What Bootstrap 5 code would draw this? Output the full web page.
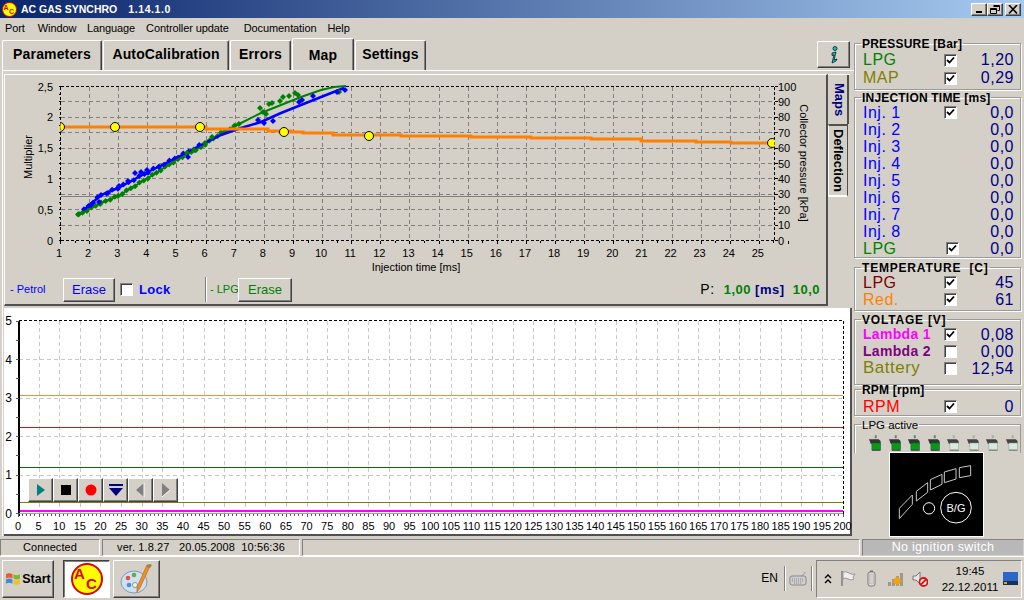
<!DOCTYPE html>
<html lang="en">
<head>
  <meta charset="UTF-8">
  <meta name="viewport" content="width=device-width, initial-scale=1.0">
  <title>AC GAS SYNCHRO</title>
  <link href="https://cdn.jsdelivr.net/npm/bootstrap@5.3.3/dist/css/bootstrap.min.css" rel="stylesheet">
  <style>
    html, body { margin:0; height:100%; overflow:hidden; background:#d4d0c8; }
    body { font-family:"Liberation Sans", Arial, sans-serif; font-size:11px; color:#000; line-height:1.2; }
    .app { width:1024px; height:600px; }
    .raised { background:#d4d0c8; border:1px solid; border-color:#fff #404040 #404040 #fff; box-shadow:inset -1px -1px 0 #808080; }
    .sunken { border:1px solid; border-color:#808080 #fff #fff #808080; }
    .svg-defs { position:absolute; }

    .title-bar { height:18px; background:linear-gradient(90deg,#0a246a,#a6caf0); color:#fff; font-weight:700; font-size:10.5px; padding:0 3px 0 2px; }
    .title-ver { margin-left:11px; letter-spacing:.6px; }
    .cap-btn { width:16px; height:13px; padding:0; display:flex; align-items:center; justify-content:center; }
    .cap-close { margin-left:2px; }
    .menu-bar { height:20px; padding:1px 0 0 5px; gap:0; letter-spacing:-.1px; white-space:nowrap; }
    .m-win { margin-left:13px; } .m-lang { margin-left:10.6px; } .m-ctl { margin-left:11px; } .m-doc { margin-left:15px; } .m-help { margin-left:11px; }

    .main-area { height:500px; }
    .left-col { width:854px; }
    .tab-strip { height:32px; padding-left:2px; }
    .wtab { height:30px; padding-bottom:2px; font-size:14px; font-weight:700; letter-spacing:.15px; background:#d4d0c8; border:1px solid; border-color:#fff #404040 transparent #fff; border-bottom:0; border-radius:2px 2px 0 0; box-shadow:inset -1px 0 0 #808080; display:flex; align-items:center; justify-content:center; margin-right:1px; }
    .wtab.on { height:32px; padding:2px 0 0; margin-top:-2px; position:relative; z-index:2; }
    .t-par { width:100px; } .t-auto { width:126px; } .t-err { width:61px; } .t-map { width:62px; } .t-set { width:71px; }
    .info-btn { width:33px; height:27px; margin:3px 4px 0 auto; display:flex; align-items:center; justify-content:center; }

    .page-frame { height:466px; margin-left:2px; border-top:1px solid #fff; border-left:1px solid #fff; padding:3px 0 0 1px; }
    .upper-panel { height:232px; }
    .map-box { width:824px; height:232px; border-top:1px solid #fff; border-left:1px solid #fff; border-bottom:2px solid #505050; border-right:2px solid #505050; }
    .map-box svg, .trend-box svg { display:block; }
    .ctrl-row { height:29px; padding-left:5px; white-space:nowrap; }
    .win-btn { height:24px; font-size:13px; display:flex; align-items:center; justify-content:center; }
    .petrol { color:#0000ff; }
    .lpg-c { color:#008000; }
    .petrol-lbl { width:53px; }
    .erase-a { width:52px; }
    .erase-b { width:54px; }
    .chk.lock-chk { margin-left:5px; }
    .lock-txt { margin-left:6px; width:44px; font-size:13px; font-weight:700; color:#0000ff; letter-spacing:.3px; }
    .v-sep { width:2px; height:25px; margin-left:22px; border-left:1px solid #808080; border-right:1px solid #fff; }
    .lpg-lbl { margin-left:3px; width:28px; }
    .p-read { margin-left:auto; font-size:13px; font-weight:700; padding-right:6px; letter-spacing:.5px; }
    .p-read .nv { color:#000080; }
    .p-read .pl { font-weight:400; font-size:14px; margin-right:5px; }
    .side-tabs { width:22px; border-top:1px solid #fff; }
    .vtab { writing-mode:vertical-rl; font-size:13px; font-weight:700; display:flex; align-items:center; justify-content:center; }
    .vtab.maps { height:49px; width:21px; padding-left:4px; color:#000080; border-right:2px solid #505050; }
    .vtab.defl { height:73px; width:20px; border:1px solid; border-color:#505050 #505050 #808080 #fff; border-top-width:2px; border-bottom:2px solid #fff; }

    .trend-box { height:228px; width:848px; margin-top:2px; background:#fff; border-right:2px solid #505050; border-bottom:2px solid #505050; position:relative; }
    .play-bar { position:absolute; left:24px; top:170px; }
    .play-btn { width:25px; height:24px; display:flex; align-items:center; justify-content:center; }

    .right-col { width:170px; }
    .grp { border:1px solid #9a9a9a; box-shadow:1px 1px 0 #fff, inset 1px 1px 0 #fff; margin:0 3px 0 0; padding:0 6px 0 8px; min-width:0; }
    .grp legend { float:none; width:auto; margin:0 0 0 -2px; padding:2px 1px 0; font-size:12px; font-weight:700; line-height:12px; letter-spacing:.2px; }
    .grp legend.wide { letter-spacing:.8px; }
    .grp legend.thin { font-weight:400; font-size:11.5px; letter-spacing:0; margin-left:6px; }
    .g-press { margin-top:-2px; height:54px; padding-top:1px; }
    .g-inj { height:168px; }
    .g-temp { margin-top:2px; height:51px; }
    .g-volt { margin-top:1px; height:73px; }
    .g-rpm { margin-top:-3px; height:34px; padding-top:2px; }
    .g-act { margin-top:1px; height:36px; border-bottom:0; box-shadow:inset 1px 1px 0 #fff; padding:0; }
    .grp-row { display:flex; align-items:center; height:17px; font-size:16px; letter-spacing:.5px; white-space:nowrap; }
    .grp-row.tall { height:18px; }
    .grp-row .nm { width:81px; }
    .grp-row .nm.sm { font-size:14px; font-weight:700; letter-spacing:.3px; }
    .grp-row .nm.lpg-row { width:83px; }
    .grp-row .val { margin-left:auto; color:#000080; }
    .c-map { color:#808000; } .c-temp { color:#800000; } .c-red { color:#ff8000; }
    .c-l1 { color:#ff00ff; } .c-l2 { color:#800080; } .c-bat { color:#808000; font-size:17px; } .c-rpm { color:#ff0000; }
    .chk { appearance:none; width:13px; height:13px; margin:0; background:#fff no-repeat center; border:1px solid; border-color:#808080 #fff #fff #808080; box-shadow:inset 1px 1px 0 #404040; flex:none; display:block; }
    .chk:checked { background-image:url("data:image/svg+xml,%3Csvg xmlns='http://www.w3.org/2000/svg' width='9' height='9'%3E%3Cpath d='M1 4l2.500 2.500L8 1.500' fill='none' stroke='%23000' stroke-width='1.800'/%3E%3C/svg%3E"); }
    .lpg-ico { gap:4px; height:22px; padding:4px 0 0 13px; }
    .ign-wrap { padding-left:36px; }
    .ign-box { width:93px; height:83px; background:#000; outline:1px solid #fff; }

    .status-row { height:18px; padding-top:1px; }
    .s-cell { height:17px; display:flex; align-items:center; justify-content:center; margin-right:2px; letter-spacing:.1px; }
    .s-conn { width:100px; } .s-ver { width:198px; } .s-gap { width:558px; }
    .no-ign { flex:1; background:#b8b8b8; color:#fff; font-size:12.5px; letter-spacing:.3px; margin-right:0; border-color:#808080 #d4d0c8 #d4d0c8 #808080; }
    .task-bar { height:44px; border-top:1px solid #fff; padding:3px 2px; }
    .task-btn { height:38px; display:flex; align-items:center; justify-content:center; }
    .start-btn { width:52px; font-weight:700; font-size:12.5px; gap:1px; }
    .ac-btn { width:47px; margin-left:9px; background:#fff; border:1px solid; border-color:#404040 #fff #fff #404040; box-shadow:inset 1px 1px 0 #808080; }
    .pal-btn { width:47px; margin-left:3px; }
    .en-txt { font-size:12px; margin-right:6px; }
    .tray-sep { width:2px; height:25px; border-left:1px solid #808080; border-right:1px solid #fff; }
    .kbd-ico { margin:0 4px 0 3px; }
    .tray { width:206px; height:38px; padding:0 3px 0 7px; margin-left:3px; }
    .i-flag { margin-left:8px; } .i-bat { margin-left:10px; } .i-sig { margin-left:11px; } .i-spk { margin-left:8px; }
    .clock { width:60px; text-align:center; font-size:11.5px; line-height:16px; margin-left:12px; }
  </style>
</head>
<body>
<svg width="0" height="0" class="svg-defs">
  <defs>
    <g id="ac-logo">
      <circle cx="16" cy="16" r="15" fill="#ffff00" stroke="#e00000" stroke-width="2"/>
      <text x="3" y="16" font-family="Liberation Sans" font-weight="700" font-size="15" fill="#e00000">A</text>
      <text x="15" y="26" font-family="Liberation Sans" font-weight="700" font-size="15" fill="#e00000">C</text>
    </g>
    <g id="inj-on">
      <rect x="7" y="0" width="2" height="3" fill="#777"/>
      <path d="M1 4h10l2 2v3H3z" fill="#333"/>
      <rect x="4" y="8" width="9" height="7" fill="#0a9a10" stroke="#064" stroke-width=".5"/>
      <rect x="4" y="15" width="9" height="1" fill="#333"/>
    </g>
    <g id="inj-off">
      <rect x="7" y="0" width="2" height="3" fill="#aaa"/>
      <path d="M1 4h10l2 2v3H3z" fill="#444"/>
      <rect x="4" y="8" width="9" height="7" fill="#d5ebe0" stroke="#8a9a90" stroke-width=".5"/>
      <rect x="4" y="15" width="9" height="1" fill="#777"/>
    </g>
  </defs>
</svg>

<div class="app d-flex flex-column">
  <!-- Title bar -->
  <div class="title-bar d-flex align-items-center">
    <svg width="15" height="15" viewBox="0 0 32 32" class="me-1"><use href="#ac-logo"/></svg>
    <span>AC GAS SYNCHRO</span><span class="title-ver">1.14.1.0</span>
    <div class="ms-auto d-flex">
      <div class="cap-btn raised"><svg width="10" height="9"><rect x="2" y="6" width="6" height="2" fill="#000"/></svg></div>
      <div class="cap-btn raised"><svg width="10" height="9"><path d="M3.500 .500h6v5h-2M.500 3.500h6v5h-6zM.500 4.500h6M3.500 1.500h6" fill="none" stroke="#000"/></svg></div>
      <div class="cap-btn raised cap-close"><svg width="10" height="9"><path d="M1 0l8 8.500M9 0l-8 8.500" stroke="#000" stroke-width="1.600"/></svg></div>
    </div>
  </div>

  <!-- Menu -->
  <div class="menu-bar d-flex align-items-center">
    <span>Port</span><span class="m-win">Window</span><span class="m-lang">Language</span><span class="m-ctl">Controller update</span><span class="m-doc">Documentation</span><span class="m-help">Help</span>
  </div>

  <div class="main-area d-flex">
    <div class="left-col d-flex flex-column">
      <!-- Tabs -->
      <div class="tab-strip d-flex align-items-end">
        <div class="wtab t-par">Parameters</div>
        <div class="wtab t-auto">AutoCalibration</div>
        <div class="wtab t-err">Errors</div>
        <div class="wtab on t-map">Map</div>
        <div class="wtab t-set">Settings</div>
        <div class="info-btn raised align-self-start">
          <svg width="12" height="18" viewBox="0 0 12 18"><circle cx="7" cy="2.500" r="2" fill="#00c8e0" stroke="#000" stroke-width=".7"/><path d="M4 7l4-1-2 8 3-1-1 2-4 2 2-8-2 .500z" fill="#00c8e0" stroke="#000" stroke-width=".7"/></svg>
        </div>
      </div>

      <div class="page-frame">
        <div class="upper-panel d-flex">
          <div class="map-box">
            <div id="mapChart"></div>
            <div class="ctrl-row d-flex align-items-center">
              <span class="petrol petrol-lbl">- Petrol</span>
              <div class="win-btn raised petrol erase-a">Erase</div>
              <input type="checkbox" class="chk lock-chk">
              <span class="lock-txt">Lock</span>
              <div class="v-sep"></div>
              <span class="lpg-c lpg-lbl">- LPG</span>
              <div class="win-btn raised lpg-c erase-b">Erase</div>
              <div class="p-read"><span class="pl">P:</span> <span class="lpg-c">1,00</span> <span class="nv">[ms]</span> <span class="lpg-c ms-1">10,0</span></div>
            </div>
          </div>
          <div class="side-tabs">
            <div class="vtab maps">Maps</div>
            <div class="vtab defl">Deflection</div>
          </div>
        </div>

        <div class="trend-box">
          <div id="trendChart"></div>
          <div class="play-bar d-flex">
            <div class="play-btn raised"><svg width="10" height="14"><path d="M1 1l8 6-8 6z" fill="#008080"/></svg></div>
            <div class="play-btn raised"><svg width="10" height="10"><rect width="10" height="10" fill="#000"/></svg></div>
            <div class="play-btn raised"><svg width="12" height="12"><circle cx="6" cy="6" r="5.500" fill="#f00"/></svg></div>
            <div class="play-btn raised"><svg width="14" height="12"><rect y="0" width="14" height="2" fill="#000080"/><path d="M0 4h14l-7 8z" fill="#000080"/></svg></div>
            <div class="play-btn raised"><svg width="9" height="14"><path d="M8 0v14L0 7z" fill="#808080"/><path d="M8 0v14" stroke="#fff"/></svg></div>
            <div class="play-btn raised"><svg width="9" height="14"><path d="M1 0v14l8-7z" fill="#808080"/><path d="M1 14l8-7" stroke="#fff"/></svg></div>
          </div>
        </div>
      </div>
    </div>

    <!-- Right panels -->
    <div class="right-col d-flex flex-column">
      <fieldset class="grp g-press">
        <legend>PRESSURE [Bar]</legend>
        <div class="grp-row tall"><span class="nm lpg-c">LPG</span><input type="checkbox" class="chk" checked><span class="val">1,20</span></div>
        <div class="grp-row tall"><span class="nm c-map">MAP</span><input type="checkbox" class="chk" checked><span class="val">0,29</span></div>
      </fieldset>
      <fieldset class="grp g-inj">
        <legend>INJECTION TIME [ms]</legend>
        <div class="grp-row"><span class="nm petrol">Inj. 1</span><input type="checkbox" class="chk" checked><span class="val">0,0</span></div>
        <div class="grp-row"><span class="nm petrol">Inj. 2</span><span class="val">0,0</span></div>
        <div class="grp-row"><span class="nm petrol">Inj. 3</span><span class="val">0,0</span></div>
        <div class="grp-row"><span class="nm petrol">Inj. 4</span><span class="val">0,0</span></div>
        <div class="grp-row"><span class="nm petrol">Inj. 5</span><span class="val">0,0</span></div>
        <div class="grp-row"><span class="nm petrol">Inj. 6</span><span class="val">0,0</span></div>
        <div class="grp-row"><span class="nm petrol">Inj. 7</span><span class="val">0,0</span></div>
        <div class="grp-row"><span class="nm petrol">Inj. 8</span><span class="val">0,0</span></div>
        <div class="grp-row"><span class="nm lpg-c lpg-row">LPG</span><input type="checkbox" class="chk" checked><span class="val">0,0</span></div>
      </fieldset>
      <fieldset class="grp g-temp">
        <legend class="wide">TEMPERATURE&nbsp; [C]</legend>
        <div class="grp-row"><span class="nm c-temp">LPG</span><input type="checkbox" class="chk" checked><span class="val">45</span></div>
        <div class="grp-row"><span class="nm c-red">Red.</span><input type="checkbox" class="chk" checked><span class="val">61</span></div>
      </fieldset>
      <fieldset class="grp g-volt">
        <legend class="wide">VOLTAGE [V]</legend>
        <div class="grp-row"><span class="nm sm c-l1">Lambda 1</span><input type="checkbox" class="chk" checked><span class="val">0,08</span></div>
        <div class="grp-row"><span class="nm sm c-l2">Lambda 2</span><input type="checkbox" class="chk"><span class="val">0,00</span></div>
        <div class="grp-row"><span class="nm c-bat">Battery</span><input type="checkbox" class="chk"><span class="val">12,54</span></div>
      </fieldset>
      <fieldset class="grp g-rpm">
        <legend>RPM [rpm]</legend>
        <div class="grp-row"><span class="nm c-rpm">RPM</span><input type="checkbox" class="chk" checked><span class="val">0</span></div>
      </fieldset>
      <fieldset class="grp g-act">
        <legend class="thin">LPG active</legend>
        <div class="lpg-ico d-flex" id="injRow"></div>
      </fieldset>
      <div class="ign-wrap">
        <div class="ign-box">
          <svg width="93" height="83" viewBox="120 98 279 249">
            <g fill="none" stroke="#c8c8c8" stroke-width="3">
              <path d="M148 264l39-40v28l-39 43z"/>
              <path d="M199 213l34-26v29l-34 26z"/>
              <path d="M241 178l35-16v30l-35 17z"/>
              <path d="M283 155l35-10v31l-35 11z"/>
              <path d="M328 142l34-6v30l-34 6z"/>
              <circle cx="237" cy="264" r="17" stroke="#fff"/>
              <circle cx="318" cy="262" r="46" stroke="#fff"/>
            </g>
            <text x="318" y="274" text-anchor="middle" font-family="Liberation Sans" font-size="33" fill="#fff">B/G</text>
          </svg>
        </div>
      </div>
    </div>
  </div>

  <!-- Status bar -->
  <div class="status-row d-flex">
    <div class="s-cell sunken s-conn">Connected</div>
    <div class="s-cell sunken s-ver">ver. 1.8.27&nbsp;&nbsp; 20.05.2008&nbsp; 10:56:36</div>
    <div class="s-cell sunken s-gap"></div>
    <div class="s-cell sunken no-ign">No ignition switch</div>
  </div>

  <!-- Task bar -->
  <div class="task-bar d-flex">
    <div class="task-btn raised start-btn">
      <svg width="16" height="16" viewBox="0 0 15 15"><path d="M1 3q3-2 6 0v4q-3-2-6 0z" fill="#e8582c"/><path d="M8 3q3 2 6 0v4q-3 2-6 0z" fill="#7cb82e"/><path d="M1 8q3-2 6 0v4q-3-2-6 0z" fill="#3a8ade"/><path d="M8 8q3 2 6 0v4q-3 2-6 0z" fill="#f4c020"/></svg>
      <span>Start</span>
    </div>
    <div class="task-btn ac-btn">
      <svg width="32" height="32" viewBox="0 0 32 32"><use href="#ac-logo"/></svg>
    </div>
    <div class="task-btn raised pal-btn">
      <svg width="34" height="32" viewBox="0 0 34 32">
        <ellipse cx="14" cy="19" rx="13" ry="11" fill="#cfe0ee" stroke="#7d9ab5"/>
        <circle cx="8" cy="15" r="2.300" fill="#e25050"/><circle cx="14" cy="12" r="2.300" fill="#5fb040"/><circle cx="9" cy="22" r="2.300" fill="#4a90d0"/><circle cx="15" cy="22" r="2.500" fill="#eef4fa" stroke="#7d9ab5"/>
        <path d="M30 3l-10 22-3 4 0-5 10-22z" fill="#f09020" stroke="#b06010" stroke-width=".6"/>
        <path d="M27 2l3-1 2 1-2 3-3-1z" fill="#a08050"/>
      </svg>
    </div>

    <div class="ms-auto d-flex align-items-center">
      <span class="en-txt">EN</span>
      <div class="tray-sep"></div>
      <svg class="kbd-ico" width="18" height="15" viewBox="0 0 18 15"><path d="M13 5c0-2 3-1 3-4" fill="none" stroke="#999"/><rect x="1" y="5" width="16" height="9" rx="2" fill="#cfcfcf" stroke="#8a8a8a"/><path d="M3 8h12M3 10h12M5 12h8" stroke="#8a8a8a" stroke-dasharray="1 1"/></svg>
      <div class="tray-sep"></div>
      <div class="tray sunken d-flex align-items-center">
        <svg width="8" height="10" viewBox="0 0 8 10"><path d="M1 4l3-3 3 3M1 9l3-3 3 3" fill="none" stroke="#000" stroke-width="1.400"/></svg>
        <svg class="i-flag" width="17" height="17" viewBox="0 0 17 17"><path d="M2 1v15" stroke="#777" stroke-width="1.400"/><path d="M3 2q3-1 6 1t6 1l-2 3 1 2q-3 2-6 0t-5 0z" fill="#eee" stroke="#999"/></svg>
        <svg class="i-bat" width="9" height="17" viewBox="0 0 9 17"><rect x="1" y="2" width="7" height="14" rx="2" fill="#e8e8e8" stroke="#777"/><rect x="3" y="0.500" width="3" height="1.500" fill="#777"/><rect x="2.500" y="4" width="4" height="10" fill="#d4d0c8" stroke="#aaa" stroke-width=".5"/></svg>
        <svg class="i-sig" width="17" height="14" viewBox="0 0 17 14"><path d="M1 10h3v4H1zM5 7h3v7H5zM9 4h3v10H9zM13 1h3v13h-3z" fill="#9a9a8a"/><circle cx="10" cy="9" r="3.500" fill="#f4a010"/><path d="M10 4v10M5 9h10" stroke="#f4a010"/></svg>
        <svg class="i-spk" width="16" height="16" viewBox="0 0 16 16"><path d="M1 5h3l4-4v12l-4-4H1z" fill="#e8e8e8" stroke="#777"/><circle cx="11.500" cy="11" r="4" fill="#fff" stroke="#e01010" stroke-width="1.800"/><path d="M9 13.500l5-5" stroke="#e01010" stroke-width="1.800"/></svg>
        <div class="clock">19:45<br>22.12.2011</div>
        <svg class="ms-auto" width="15" height="13" viewBox="0 0 15 13"><rect width="15" height="13" fill="#2a66c8"/><rect y="9" width="15" height="4" fill="#1c2f55"/><rect x="1" y="10" width="3" height="2" fill="#e8a020"/></svg>
      </div>
    </div>
  </div>
</div>

<script>
  // injector icons
  var injHtml = '';
  for (var n = 0; n < 8; n++) {
    injHtml += '<svg width="16" height="17" viewBox="0 0 16 17"><use href="#' + (n < 4 ? 'inj-on' : 'inj-off') + '"/></svg>';
  }
  document.getElementById('injRow').innerHTML = injHtml;

  function hline(x1, x2, y, st) { return '<line shape-rendering="crispEdges" x1="' + x1 + '" x2="' + x2 + '" y1="' + y + '" y2="' + y + '" ' + st + '/>'; }
  function vline(x, y1, y2, st) { return '<line shape-rendering="crispEdges" x1="' + x + '" x2="' + x + '" y1="' + y1 + '" y2="' + y2 + '" ' + st + '/>'; }
  function txt(x, y, s, anchor, extra) { return '<text x="' + x + '" y="' + y + '" text-anchor="' + (anchor || 'start') + '" ' + (extra || '') + '>' + s + '</text>'; }
  function diamonds(pts, col) {
    return pts.map(function (p) {
      return '<path d="M' + p[0] + ' ' + (p[1] - 3) + 'l3 3-3 3-3-3z" fill="' + col + '"/>';
    }).join('');
  }
  // sample a polyline so dots sit along the curve
  function along(line, step, jitter) {
    var out = [], k = 0;
    for (var i = 0; i < line.length - 1; i++) {
      var a = line[i], b = line[i + 1], len = Math.hypot(b[0] - a[0], b[1] - a[1]);
      for (var d = 0; d < len; d += step) {
        var t = d / len;
        out.push([a[0] + (b[0] - a[0]) * t, a[1] + (b[1] - a[1]) * t + ((k++ % 3) - 1) * jitter]);
      }
    }
    return out;
  }

  // Map chart (coordinates are page pixels, hence the viewBox offset)
  function drawMap() {
    var L = 59.5, R = 773.5, T = 86.5, B = 240.5, s = '', i;
    var dash = 'stroke="#808080" stroke-dasharray="4 3"';
    for (i = 1; i < 25; i++) s += vline(L + i * 29.12, T, B, dash);
    for (i = 1; i < 10; i++) s += hline(L, R, T + i * 15.4, dash);
    var axis = 'stroke="#000" stroke-dasharray="3 2"';
    s += hline(L, R, T, axis) + hline(L, R, B, axis) + vline(L, T, B, axis) + vline(R, T, B, axis);
    s += hline(L, R, 196.5, 'stroke="#808080"');
    for (i = 0; i <= 10; i++) s += hline(R, R + 3, T + i * 15.4, 'stroke="#000"');
    for (i = 0; i <= 50; i++) s += vline(L + i * 14.56, B, B + (i % 2 ? 2 : 3), 'stroke="#000"');
    for (i = 0; i <= 20; i++) s += hline(L - 2, L, T + i * 7.7, 'stroke="#000"');

    ['2,5', '2', '1,5', '1', '0,5', '0'].forEach(function (t, j) { s += txt(52, T + j * 30.8 + 4, t, 'end'); });
    for (i = 0; i <= 10; i++) s += txt(777, T + i * 15.4 + 4, String(100 - i * 10));
    for (i = 1; i <= 25; i++) s += txt(L + (i - 1) * 29.12 - 1.500, 257, String(i), 'middle');
    s += txt(415, 271, 'Injection time [ms]', 'middle');
    s += txt(0, 0, 'Multiplier', 'middle', 'transform="translate(31 157) rotate(-90)"');
    s += txt(0, 0, 'Collector pressure [kPa]', 'middle', 'transform="translate(799 163) rotate(90)"');

    var green = [[77,215],[100,203],[117,196],[147,178],[177,159],[200,147],[220,133],[240,123],[260,113],[280,105],[300,97],[320,90],[333,87],[345,86]];
    var blue = [[83,210],[100,195],[117,188],[147,172],[177,157],[200,145],[220,135],[240,128],[260,122],[280,113],[300,105],[320,97],[343,88]];
    s += diamonds(along(green.slice(0, 8), 5, .6), '#008000');
    s += diamonds(along(blue.slice(0, 6), 6, .8), '#0000ff');
    s += '<polyline points="' + green.join(' ') + '" fill="none" stroke="#008000" stroke-width="2"/>';
    s += '<polyline points="' + blue.join(' ') + '" fill="none" stroke="#0000ff" stroke-width="2.500"/>';
    s += diamonds([[259,108],[268,104],[271,103],[279,101],[282,97],[288,96],[294,93],[297,95],[262,112],[265,114],[338,92],[211,137],[204,143],[193,150],[186,153],[78,214]], '#008000');
    s += diamonds([[272,121],[263,123],[257,120],[298,102],[301,100],[312,96],[336,92],[344,90],[187,157],[134,173],[140,172],[146,170],[158,167],[127,181],[118,186],[107,193],[90,205],[98,202]], '#0000ff');

    // orange map line and its handles, cut at the plot edges
    var orange = [[59,127],[205,127],[205,129],[267,129],[267,131],[290,131],[290,132],[302,132],[302,133],[332,133],[332,135],[400,135],[400,136],[470,136],[470,137],[530,137],[530,138],[590,138],[590,139],[640,139],[640,141],[695,141],[695,142],[730,142],[730,143],[772,143]];
    var o = '<polyline points="' + orange.join(' ') + '" fill="none" stroke="#ff8000" stroke-width="3"/>';
    [[59,127],[114,127],[199,127],[283,132],[368,136],[771,143]].forEach(function (p) {
      o += '<circle cx="' + p[0] + '" cy="' + p[1] + '" r="4.500" fill="#ffff00" stroke="#000"/>';
    });
    s += '<clipPath id="mc"><rect x="' + L + '" y="' + T + '" width="' + (R - L) + '" height="' + (B - T) + '"/></clipPath><g clip-path="url(#mc)">' + o + '</g>';
    document.getElementById('mapChart').innerHTML =
      '<svg width="824" height="200" viewBox="4 75 824 200" font-family="Liberation Sans" font-size="11" fill="#000">' + s + '</svg>';
  }

  // Trend chart
  function drawTrend() {
    var L = 18.5, R = 843, T = 320.5, B = 513.5, u = 38.5, px = (R - L) / 200, s = '', i;
    var dash = 'stroke="#c8c8c8" stroke-dasharray="4 3"';
    for (i = 5; i < 200; i += 5) s += vline(L + i * px, T, B, dash);
    for (i = 1; i < 5; i++) s += hline(L, R, B - i * u, dash);
    s += hline(L, R, T, 'stroke="#000" stroke-dasharray="3 2"');
    s += vline(R, T, B, 'stroke="#000" stroke-dasharray="3 2"');
    s += hline(L, R, 395.5, 'stroke="#e0963c"');
    s += hline(L, R, 427.5, 'stroke="#b82020"');
    s += hline(L, R, 467.5, 'stroke="#0a6a0a"');
    s += hline(L, R, 502.5, 'stroke="#808000"');
    s += hline(L, R, 511, 'stroke="#ff00ff" stroke-width="2"');
    s += vline(L, T, B + 2, 'stroke="#000" stroke-width="2"');
    s += hline(L, R, B, 'stroke="#a0a0a0"');
    for (i = 0; i <= 200; i++) s += vline(L + i * px, B, B + (i % 5 ? 2 : 3), 'stroke="#555"');
    for (i = 0; i <= 10; i++) s += hline(L - 3, L, B - i * u / 2, 'stroke="#555"');
    for (i = 0; i <= 5; i++) s += txt(12, B - i * u + 4, String(i), 'end', 'font-size="12"');
    for (i = 0; i <= 200; i += 5) s += txt(L + i * px - 0.500, 530, String(i), 'middle');
    document.getElementById('trendChart').innerHTML =
      '<svg width="848" height="226" viewBox="4 308 848 226" font-family="Liberation Sans" font-size="11" fill="#000">' + s + '</svg>';
  }

  drawMap();
  drawTrend();
</script>
<script src="https://cdn.jsdelivr.net/npm/bootstrap@5.3.3/dist/js/bootstrap.bundle.min.js"></script>
</body>
</html>
